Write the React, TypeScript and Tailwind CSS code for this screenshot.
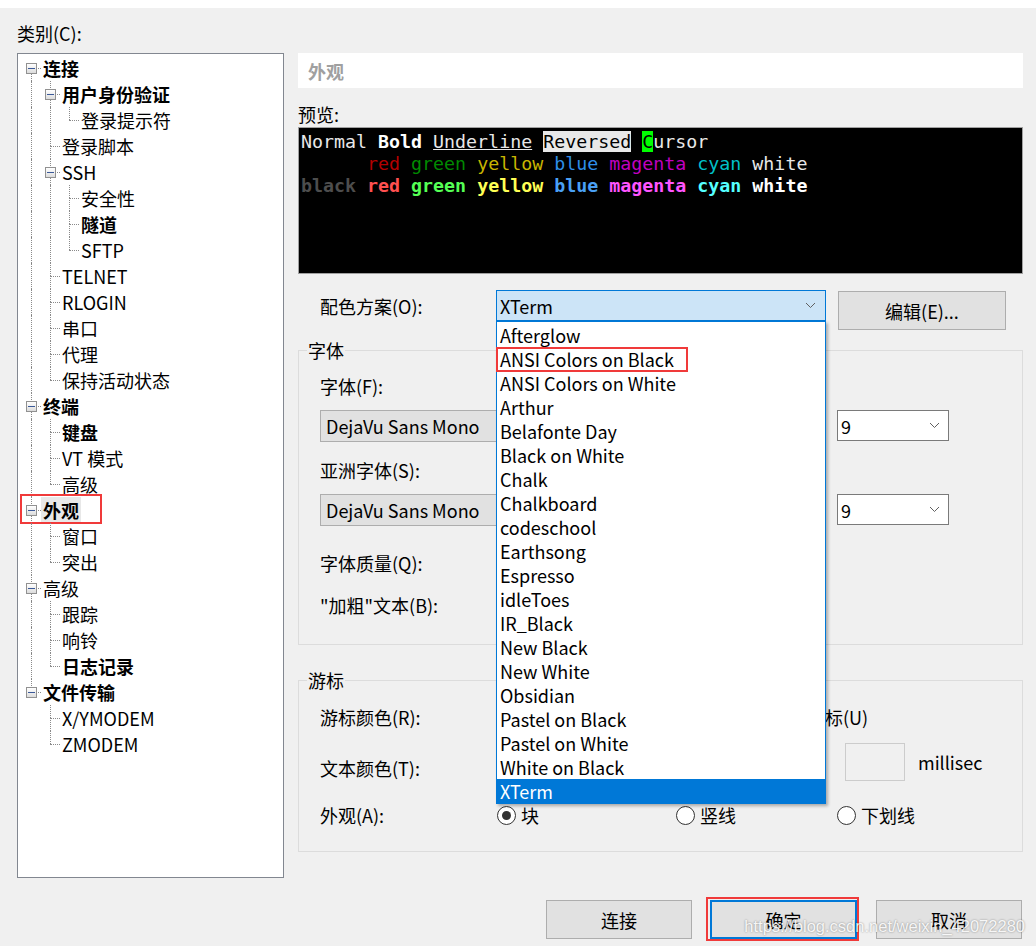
import React from 'react';

type TreeNode = { label: string; level: number; bold?: boolean; exp?: boolean; sel?: boolean };

const tree: TreeNode[] = [
  { label: '连接', level: 0, bold: true, exp: true },
  { label: '用户身份验证', level: 1, bold: true, exp: true },
  { label: '登录提示符', level: 2 },
  { label: '登录脚本', level: 1 },
  { label: 'SSH', level: 1, exp: true },
  { label: '安全性', level: 2 },
  { label: '隧道', level: 2, bold: true },
  { label: 'SFTP', level: 2 },
  { label: 'TELNET', level: 1 },
  { label: 'RLOGIN', level: 1 },
  { label: '串口', level: 1 },
  { label: '代理', level: 1 },
  { label: '保持活动状态', level: 1 },
  { label: '终端', level: 0, bold: true, exp: true },
  { label: '键盘', level: 1, bold: true },
  { label: 'VT 模式', level: 1 },
  { label: '高级', level: 1 },
  { label: '外观', level: 0, bold: true, exp: true, sel: true },
  { label: '窗口', level: 1 },
  { label: '突出', level: 1 },
  { label: '高级', level: 0, exp: true },
  { label: '跟踪', level: 1 },
  { label: '响铃', level: 1 },
  { label: '日志记录', level: 1, bold: true },
  { label: '文件传输', level: 0, bold: true, exp: true },
  { label: 'X/YMODEM', level: 1 },
  { label: 'ZMODEM', level: 1 },
];

const schemes = [
  'Afterglow',
  'ANSI Colors on Black',
  'ANSI Colors on White',
  'Arthur',
  'Belafonte Day',
  'Black on White',
  'Chalk',
  'Chalkboard',
  'codeschool',
  'Earthsong',
  'Espresso',
  'idleToes',
  'IR_Black',
  'New Black',
  'New White',
  'Obsidian',
  'Pastel on Black',
  'Pastel on White',
  'White on Black',
  'XTerm',
];

// does the node at idx have a later sibling under the same parent
const hasNextSibling = (idx: number): boolean => {
  const lv = tree[idx].level;
  for (let j = idx + 1; j < tree.length; j++) {
    if (tree[j].level < lv) return false;
    if (tree[j].level === lv) return true;
  }
  return false;
};

const rows = tree.map((n, i) => {
  const cont: boolean[] = [];
  let lv = n.level;
  for (let j = i - 1; j >= 0 && lv > 0; j--) {
    if (tree[j].level < lv) {
      lv = tree[j].level;
      cont[lv] = hasNextSibling(j);
    }
  }
  return { ...n, cont, next: hasNextSibling(i), first: i === 0 };
});

function Chevron() {
  return (
    <svg width="11" height="7" viewBox="0 0 11 7" className="shrink-0">
      <polyline points="1,1 5.5,5.5 10,1" fill="none" stroke="#606060" strokeWidth="1" />
    </svg>
  );
}

function Radio({ checked, label }: { checked?: boolean; label: string }) {
  return (
    <div className="flex items-center gap-[5px]">
      <div className="flex h-[19px] w-[19px] items-center justify-center rounded-full border border-[#333] bg-white">
        {checked && <div className="h-[9px] w-[9px] rounded-full bg-[#333]" />}
      </div>
      <span>{label}</span>
    </div>
  );
}

export default function App() {
  return (
    <div className="h-[946px] w-[1036px] bg-[#f0f0f0] font-['Noto_Sans_CJK_SC',sans-serif] text-[18px] leading-[22px] text-black">
      <div className="h-[8px] bg-white" />
      <div className="pl-[17px] pt-[14px]">
        <div className="mb-[9px] h-[22px]">类别(C):</div>
        <div className="flex gap-[14px]">
          {/* category tree */}
          <div className="h-[825px] w-[267px] shrink-0 border border-[#828790] bg-white pl-[4px] pt-px">
            {rows.map((n, i) => (
              <div key={i} className="relative flex h-[26px]">
                {Array.from({ length: n.level }).map((_, l) => (
                  <div key={l} className="relative w-[19px] shrink-0">
                    {n.cont[l] && <div className="absolute bottom-0 left-[9px] top-0 border-l border-dotted border-[#8a8a8a]" />}
                  </div>
                ))}
                <div className="relative w-[19px] shrink-0">
                  {!n.first && <div className="absolute left-[9px] top-0 h-[13px] border-l border-dotted border-[#8a8a8a]" />}
                  {n.next && <div className="absolute bottom-0 left-[9px] top-[13px] border-l border-dotted border-[#8a8a8a]" />}
                  <div className="absolute left-[9px] right-0 top-[13px] border-t border-dotted border-[#8a8a8a]" />
                  {n.exp && (
                    <div className="absolute left-[4px] top-[8px] flex h-[11px] w-[11px] items-center justify-center border border-[#919191] bg-gradient-to-b from-white to-[#dcdcdc]">
                      <div className="h-px w-[7px] bg-[#3b5998]" />
                    </div>
                  )}
                </div>
                <span className={`px-[2px] leading-[26px] whitespace-nowrap ${n.bold ? 'font-bold' : ''} ${n.sel ? 'bg-[#e8e8e8]' : ''}`}>
                  {n.label}
                </span>
                {n.sel && <div className="absolute left-[-2px] top-[-3px] h-[30px] w-[82px] border-2 border-[#f03a3a]" />}
              </div>
            ))}
          </div>

          {/* settings panel */}
          <div className="w-[725px]">
            <div className="flex h-[35px] items-center bg-white pl-[10px] font-bold text-[#a0a0a0]">外观</div>
            <div className="flex h-[39px] items-end pb-[2px]">预览:</div>
            <div className="h-[147px] border border-[#a0a0a0] bg-black pl-[2px] pt-[3px] font-['DejaVu_Sans_Mono',monospace] text-[18.3px] leading-[22px] whitespace-pre text-[#e8e8e8]">
              <div>
                Normal <span className="font-bold text-white">Bold</span> <span className="underline">Underline</span>{' '}
                <span className="bg-[#e8e8e8] text-black">Reversed</span> <span className="bg-[#00ff00] text-black">C</span>ursor
              </div>
              <div>
                {'      '}
                <span className="text-[#b40000]">red</span> <span className="text-[#008a00]">green</span>{' '}
                <span className="text-[#c8b400]">yellow</span> <span className="text-[#2e8ee8]">blue</span>{' '}
                <span className="text-[#c000c0]">magenta</span> <span className="text-[#00c0c8]">cyan</span>{' '}
                <span className="text-[#e8e8e8]">white</span>
              </div>
              <div className="font-bold">
                <span className="text-[#4d4d4d]">black</span> <span className="text-[#ff5050]">red</span>{' '}
                <span className="text-[#55ff55]">green</span> <span className="text-[#ffff55]">yellow</span>{' '}
                <span className="text-[#4aa0f5]">blue</span> <span className="text-[#ff55ff]">magenta</span>{' '}
                <span className="text-[#55ffff]">cyan</span> <span className="text-white">white</span>
              </div>
            </div>

            {/* color scheme */}
            <div className="mt-[16px] flex h-[40px] items-start pl-[22px]">
              <div className="flex h-[31px] w-[176px] items-center">配色方案(O):</div>
              <div className="relative">
                <div className="flex h-[31px] w-[330px] items-center justify-between border border-[#0078d7] bg-[#cce4f7] pl-[3px] pr-[9px]">
                  <span>XTerm</span>
                  <Chevron />
                </div>
                <div className="absolute left-0 top-full z-10 w-[330px] border border-[#0078d7] bg-white pt-px shadow-[2px_2px_3px_rgba(0,0,0,0.3)]">
                  {schemes.map((s) => (
                    <div
                      key={s}
                      className={`relative h-[24px] pl-[3px] leading-[24px] whitespace-nowrap ${s === 'XTerm' ? 'bg-[#0078d7] text-white' : ''}`}
                    >
                      {s}
                      {s === 'ANSI Colors on Black' && (
                        <div className="absolute left-[-1px] top-0 h-[25px] w-[192px] border-2 border-[#f03a3a]" />
                      )}
                    </div>
                  ))}
                </div>
              </div>
              <div className="ml-[12px] mt-px flex h-[39px] w-[168px] items-center justify-center border border-[#adadad] bg-[#e1e1e1]">
                编辑(E)...
              </div>
            </div>

            {/* font group */}
            <fieldset className="mt-[9px] border border-[#dcdcdc] pb-[28px] pl-[21px]">
              <legend className="ml-[-13px] px-px">字体</legend>
              <div className="mt-[14px] h-[22px]">字体(F):</div>
              <div className="mt-[13px] flex items-start">
                <div className="flex h-[32px] w-[500px] items-center border border-[#adadad] bg-[#e1e1e1] pl-[5px]">DejaVu Sans Mono</div>
                <div className="ml-[17px] flex h-[31px] w-[112px] items-center justify-between border border-[#7a7a7a] bg-white pl-[3px] pr-[8px]">
                  <span>9</span>
                  <Chevron />
                </div>
              </div>
              <div className="mt-[17px] h-[22px]">亚洲字体(S):</div>
              <div className="mt-[13px] flex items-start">
                <div className="flex h-[32px] w-[500px] items-center border border-[#adadad] bg-[#e1e1e1] pl-[5px]">DejaVu Sans Mono</div>
                <div className="ml-[17px] flex h-[31px] w-[112px] items-center justify-between border border-[#7a7a7a] bg-white pl-[3px] pr-[8px]">
                  <span>9</span>
                  <Chevron />
                </div>
              </div>
              <div className="mt-[26px] h-[22px]">字体质量(Q):</div>
              <div className="mt-[20px] h-[22px]">"加粗"文本(B):</div>
            </fieldset>

            {/* cursor group */}
            <fieldset className="mt-[24px] border border-[#dcdcdc] pb-[25px] pl-[21px]">
              <legend className="ml-[-13px] px-px">游标</legend>
              <div className="mt-[15px] flex h-[22px]">
                <div className="w-[451px]">游标颜色(R):</div>
                <span>闪烁游标(U)</span>
              </div>
              <div className="mt-[15px] flex h-[38px]">
                <div className="w-[525px] pt-[14px]">文本颜色(T):</div>
                <div className="h-[38px] w-[60px] border border-[#cccccc] bg-[#f0f0f0]" />
                <div className="ml-[13px] flex items-center">millisec</div>
              </div>
              <div className="mt-[23px] flex h-[22px] items-center">
                <div className="w-[177px]">外观(A):</div>
                <div className="w-[179px]">
                  <Radio checked label="块" />
                </div>
                <div className="w-[161px]">
                  <Radio label="竖线" />
                </div>
                <Radio label="下划线" />
              </div>
            </fieldset>
          </div>
        </div>

        {/* dialog buttons */}
        <div className="relative mt-[22px] flex justify-end pr-[14px]">
          <div className="flex h-[39px] w-[146px] items-center justify-center border border-[#adadad] bg-[#e1e1e1]">连接</div>
          <div className="relative ml-[18px] flex h-[39px] w-[147px] items-center justify-center border-2 border-[#0078d7] bg-[#e1e1e1]">
            确定
            <div className="absolute left-[-6px] top-[-5px] h-[44px] w-[153px] border-2 border-[#f03a3a]" />
          </div>
          <div className="ml-[19px] flex h-[39px] w-[146px] items-center justify-center border border-[#adadad] bg-[#e1e1e1]">取消</div>
          <div className="absolute right-[11px] top-[15px] font-['Liberation_Sans',sans-serif] text-[16.5px] text-white/90 [text-shadow:0_0_2px_rgba(0,0,0,0.45)]">
            https://blog.csdn.net/weixin_42072280
          </div>
        </div>
      </div>
    </div>
  );
}
